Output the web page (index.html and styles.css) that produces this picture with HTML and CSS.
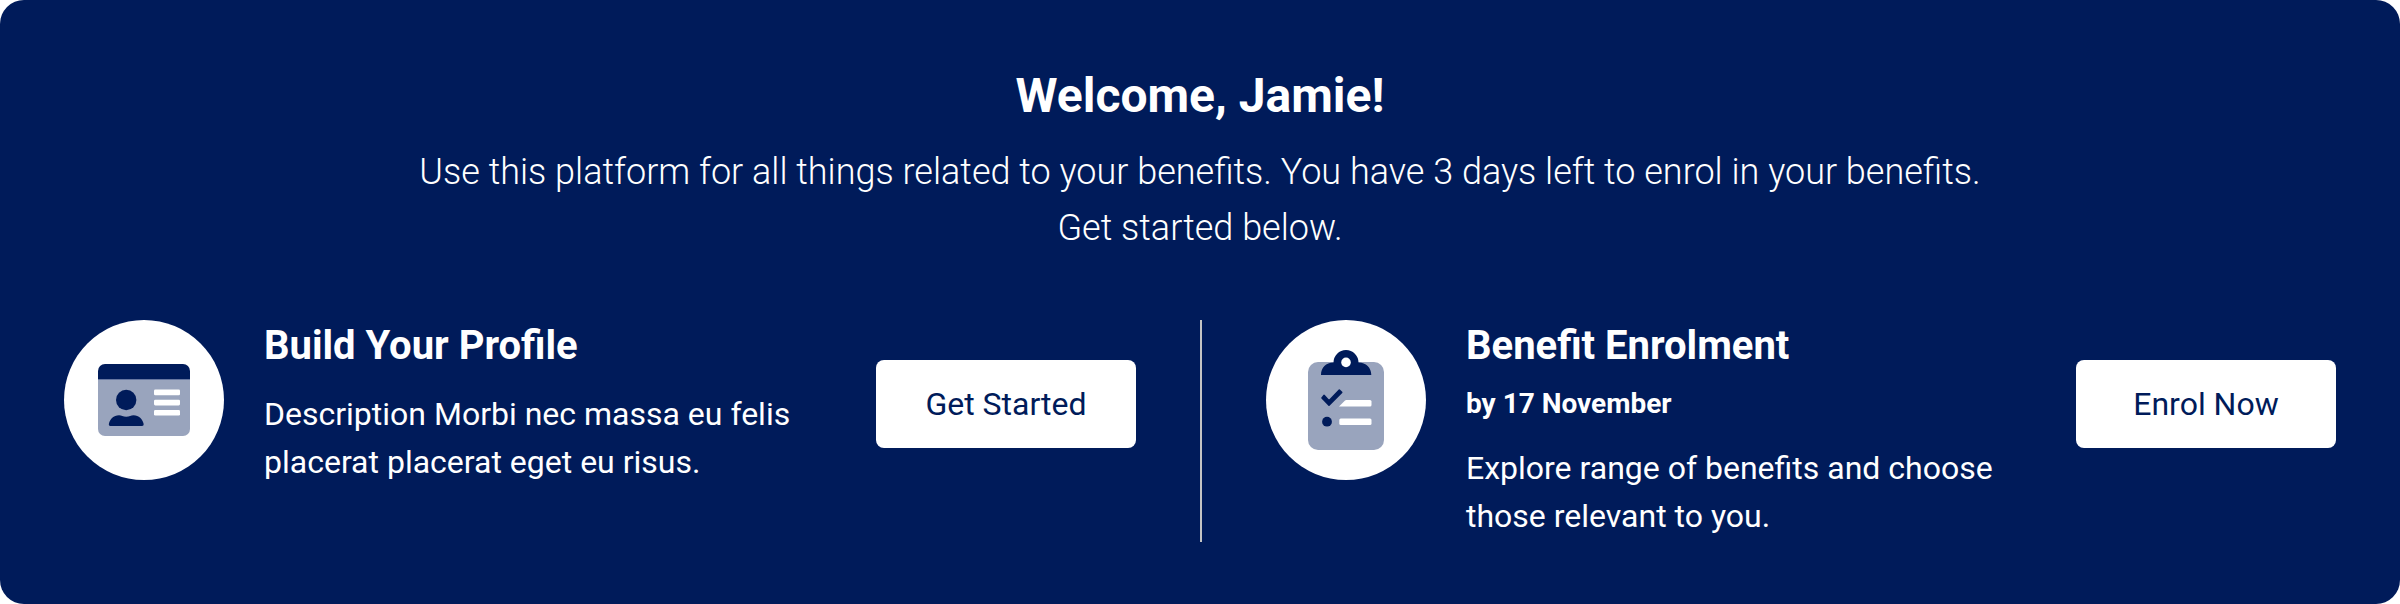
FILE: index.html
```html
<!DOCTYPE html>
<html lang="en">
<head>
<meta charset="utf-8">
<meta name="viewport" content="width=device-width, initial-scale=1">
<title>Welcome</title>
<link rel="stylesheet" href="styles.css">
</head>
<body>
<main class="banner">
  <header class="intro">
    <h1 class="title">Welcome, Jamie!</h1>
    <p class="lead">Use this platform for all things related to your benefits. You have 3 days left to enrol in your benefits. Get started below.</p>
  </header>
  <div class="tasks">
    <section class="task">
      <svg class="icon" viewBox="0 0 160 160" aria-hidden="true">
        <circle cx="80" cy="80" r="80" fill="#fff"/>
        <path fill="#99a4bd" d="M34 59H126V109a7 7 0 0 1-7 7H41a7 7 0 0 1-7-7Z"/>
        <path fill="#001b5a" d="M41 44H119a7 7 0 0 1 7 7V59H34V51a7 7 0 0 1 7-7Z"/>
        <path fill="#6676a0" d="M34 59H126V60H34Z"/>
        <circle cx="62.2" cy="80" r="10.2" fill="#001b5a"/>
        <path fill="#001b5a" d="M55 95.3C57.500 95.300 59 96.700 62.200 96.700S67 95.300 69.500 95.300C75 95.300 78.500 99 79.600 103.800C79.800 105.200 79.200 106 78 106H46.500C45.200 106 44.600 105.200 44.900 103.800C46 99 49.500 95.300 55 95.300Z"/>
        <g fill="#fff">
          <rect x="90" y="69.600" width="26" height="5.600" rx="1.300"/>
          <rect x="90" y="79.800" width="26" height="5.600" rx="1.300"/>
          <rect x="90" y="90" width="26" height="5.600" rx="1.300"/>
        </g>
      </svg>
      <div class="copy">
        <h2 class="heading">Build Your Profile</h2>
        <p class="text">Description Morbi nec massa eu felis placerat placerat eget eu risus.</p>
      </div>
      <button class="action" type="button">Get Started</button>
    </section>
    <section class="task">
      <svg class="icon" viewBox="0 0 160 160" aria-hidden="true">
        <circle cx="80" cy="80" r="80" fill="#fff"/>
        <rect x="42" y="42" width="76" height="88" rx="10" fill="#99a4bd"/>
        <path fill="#001b5a" d="M55 55C55 47.500 60 42.500 67.500 42.500A12.500 12.500 0 0 1 92.500 42.500C100 42.500 105.300 47.500 105.300 55Z"/>
        <circle cx="80" cy="42.400" r="4.800" fill="#fff"/>
        <path fill="#001b5a" stroke="#001b5a" stroke-width="1.600" stroke-linejoin="round" d="M58 75.400L63 80.800L73.300 70.100L75.700 72.400L63 85.200L56 78Z"/>
        <circle cx="61" cy="101.700" r="4.900" fill="#001b5a"/>
        <g fill="#fff">
          <path d="M73 86.500L79 80.500Q79.500 80 80.200 80H104Q105.500 80 105.500 81.500V85Q105.500 86.500 104 86.500Z"/>
          <rect x="73.300" y="98.500" width="32.200" height="6.500" rx="1.500"/>
        </g>
      </svg>
      <div class="copy">
        <h2 class="heading">Benefit Enrolment</h2>
        <p class="deadline">by 17 November</p>
        <p class="text">Explore range of benefits and choose those relevant to you.</p>
      </div>
      <button class="action" type="button">Enrol Now</button>
    </section>
  </div>
</main>
</body>
</html>
```
FILE: styles.css
```css
* {
  box-sizing: border-box;
}

body {
  margin: 0;
  background: #fff;
  font-family: Roboto, "Liberation Sans", sans-serif;
  color: #fff;
}

h1, h2, p {
  margin: 0;
}

.banner {
  min-height: 100vh;
  padding: 64px 64px 60px;
  border-radius: 24px;
  background: #001b5a;
}

.intro {
  max-width: 1600px;
  margin: 0 auto 64px;
  text-align: center;
}

.title {
  margin-bottom: 16px;
  font-size: 48px;
  line-height: 64px;
  font-weight: 700;
}

.lead {
  font-size: 36px;
  line-height: 56px;
  font-weight: 300;
}

.tasks {
  display: grid;
  grid-template-columns: 1fr 1fr;
}

.task {
  display: flex;
  align-items: flex-start;
  gap: 40px;
}

.task:first-child {
  padding-right: 64px;
}

.task + .task {
  padding-left: 64px;
  border-left: 2px solid #c4c4c4;
}

.icon {
  flex: none;
  width: 160px;
  height: 160px;
}

.copy {
  flex: 1;
  padding-bottom: 2px;
}

.heading {
  font-size: 40px;
  line-height: 52px;
  font-weight: 700;
}

.deadline {
  margin-top: 10px;
  font-size: 28px;
  line-height: 44px;
  font-weight: 700;
}

.text {
  margin-top: 18px;
  font-size: 32px;
  line-height: 48px;
}

.action {
  flex: none;
  width: 260px;
  height: 88px;
  margin-top: 40px;
  padding: 0;
  border: 0;
  border-radius: 8px;
  background: #fff;
  color: #001b5a;
  font: inherit;
  font-size: 32px;
  cursor: pointer;
}
```
